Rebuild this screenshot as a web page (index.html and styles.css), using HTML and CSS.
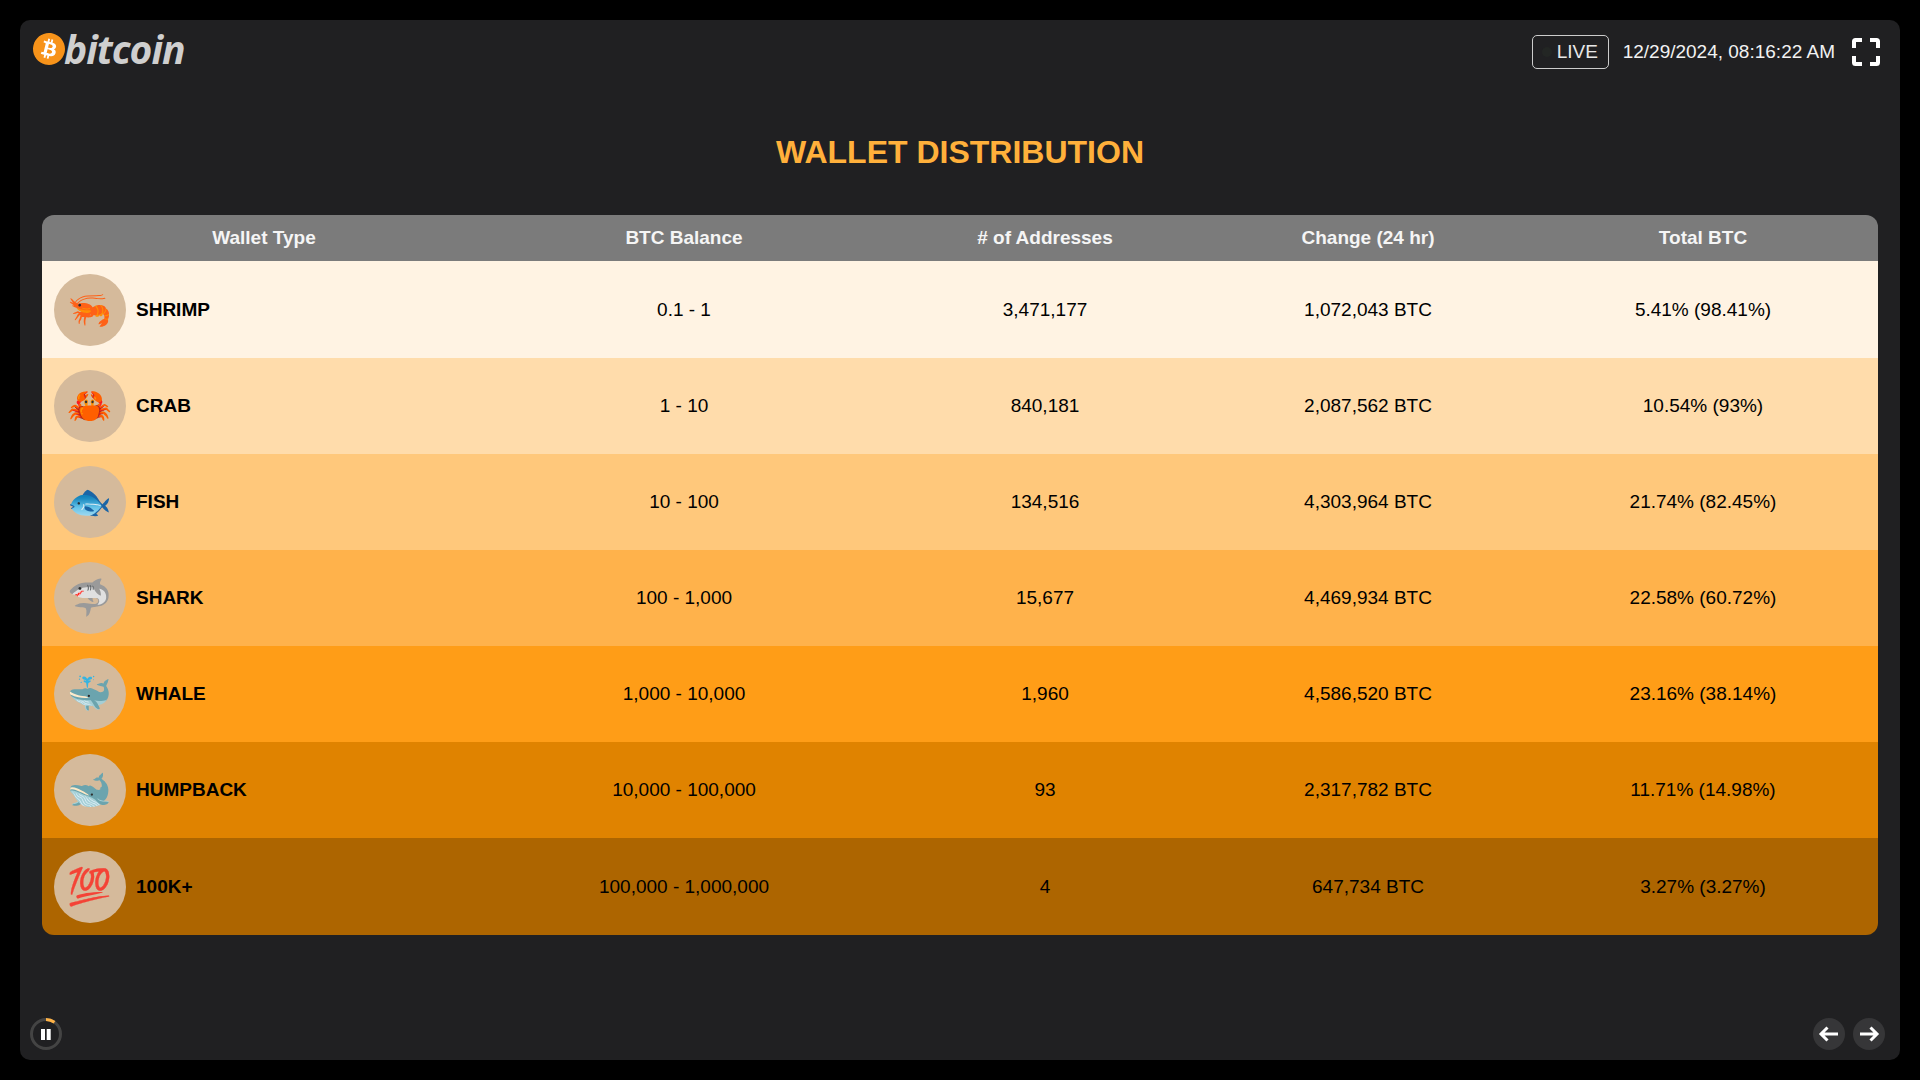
FILE: index.html
```html
<!DOCTYPE html>
<html lang="en">
<head>
<meta charset="utf-8">
<title>Wallet Distribution</title>
<link rel="stylesheet" href="styles.css">
</head>
<body>
<main class="panel">
  <header class="topbar">
    <div class="logo">
      <svg class="logo-mark" viewBox="0 0 24 24"><circle cx="12" cy="12" r="11" fill="#fff"/><path fill="#f7931a" d="M23.638 14.904c-1.602 6.43-8.113 10.34-14.542 8.736C2.67 22.05-1.244 15.525.362 9.105 1.962 2.67 8.475-1.243 14.9.358c6.43 1.605 10.342 8.115 8.738 14.548v-.002zm-6.35-4.613c.24-1.59-.974-2.45-2.64-3.03l.54-2.153-1.315-.33-.525 2.107c-.345-.087-.705-.167-1.064-.25l.526-2.127-1.32-.33-.54 2.165c-.285-.067-.565-.132-.84-.2l-1.815-.45-.35 1.407s.975.225.955.236c.535.136.63.486.615.766l-1.477 5.92c-.075.166-.24.406-.614.314.015.02-.96-.24-.96-.24l-.66 1.51 1.71.426.93.242-.54 2.19 1.32.327.54-2.17c.36.1.705.19 1.05.273l-.51 2.154 1.32.33.545-2.19c2.24.427 3.93.257 4.64-1.774.57-1.637-.03-2.58-1.217-3.196.854-.193 1.5-.76 1.68-1.93h.01zm-3.01 4.22c-.404 1.64-3.157.75-4.05.53l.72-2.9c.896.23 3.757.67 3.33 2.37zm.41-4.24c-.37 1.49-2.662.735-3.405.55l.654-2.64c.744.18 3.137.524 2.75 2.084v.006z"/></svg>
      <span class="logo-word">bitcoin</span>
    </div>
    <div class="status">
      <div class="live"><span class="live-dot"></span>LIVE</div>
      <time class="clock">12/29/2024, 08:16:22 AM</time>
      <svg class="fullscreen" viewBox="0 0 28 28"><path d="M2 10V3.500Q2 2 3.500 2H10M18 2h6.500Q26 2 26 3.500V10M26 18v6.500Q26 26 24.500 26H18M10 26H3.500Q2 26 2 24.500V18" fill="none" stroke="#fff" stroke-width="4"/></svg>
    </div>
  </header>

  <h1 class="title">WALLET DISTRIBUTION</h1>

  <table class="wallets">
    <colgroup><col class="c1"><col class="c2"><col class="c3"><col class="c4"><col class="c5"></colgroup>
    <thead>
      <tr><th>Wallet Type</th><th>BTC Balance</th><th># of Addresses</th><th>Change (24 hr)</th><th>Total BTC</th></tr>
    </thead>
    <tbody>
      <tr class="r1"><td><div class="wallet"><span class="avatar">🦐</span><b>SHRIMP</b></div></td><td>0.1 - 1</td><td>3,471,177</td><td>1,072,043 BTC</td><td>5.41% (98.41%)</td></tr>
      <tr class="r2"><td><div class="wallet"><span class="avatar">🦀</span><b>CRAB</b></div></td><td>1 - 10</td><td>840,181</td><td>2,087,562 BTC</td><td>10.54% (93%)</td></tr>
      <tr class="r3"><td><div class="wallet"><span class="avatar">🐟</span><b>FISH</b></div></td><td>10 - 100</td><td>134,516</td><td>4,303,964 BTC</td><td>21.74% (82.45%)</td></tr>
      <tr class="r4"><td><div class="wallet"><span class="avatar">🦈</span><b>SHARK</b></div></td><td>100 - 1,000</td><td>15,677</td><td>4,469,934 BTC</td><td>22.58% (60.72%)</td></tr>
      <tr class="r5"><td><div class="wallet"><span class="avatar">🐳</span><b>WHALE</b></div></td><td>1,000 - 10,000</td><td>1,960</td><td>4,586,520 BTC</td><td>23.16% (38.14%)</td></tr>
      <tr class="r6"><td><div class="wallet"><span class="avatar">🐋</span><b>HUMPBACK</b></div></td><td>10,000 - 100,000</td><td>93</td><td>2,317,782 BTC</td><td>11.71% (14.98%)</td></tr>
      <tr class="r7"><td><div class="wallet"><span class="avatar">💯</span><b>100K+</b></div></td><td>100,000 - 1,000,000</td><td>4</td><td>647,734 BTC</td><td>3.27% (3.27%)</td></tr>
    </tbody>
  </table>

  <footer class="bottombar">
    <div class="pause">
      <svg viewBox="0 0 32 32"><circle cx="16" cy="16" r="14.500" fill="none" stroke="#444" stroke-width="3"/><path d="M16 1.500A14.500 14.500 0 0 1 24.500 4.300" fill="none" stroke="#ffb347" stroke-width="3"/><path d="M11 11h4v11h-4zM16.700 11h4v11h-4z" fill="#fff"/></svg>
    </div>
    <div class="nav">
      <span class="nav-btn"><svg viewBox="0 0 32 32"><path d="M25 16H9M14.500 9.500L8 16l6.500 6.500" fill="none" stroke="#fff" stroke-width="3"/></svg></span>
      <span class="nav-btn"><svg viewBox="0 0 32 32"><path d="M7 16h16M17.500 9.500L24 16l-6.500 6.500" fill="none" stroke="#fff" stroke-width="3"/></svg></span>
    </div>
  </footer>
</main>
</body>
</html>
```
FILE: styles.css
```css
* { box-sizing: border-box; }
html, body { height: 100%; }
body {
  margin: 0;
  padding: 20px;
  background: #000;
  font-family: "Liberation Sans", Arial, sans-serif;
  color: #fff;
}
.panel {
  height: 1040px;
  background: #202022;
  border-radius: 10px;
  display: flex;
  flex-direction: column;
  padding: 13px 22px 10px;
  overflow: hidden;
}
.topbar {
  display: flex;
  justify-content: space-between;
  align-items: flex-start;
  margin: 0 -2px 0 -9px;
}
.logo { display: flex; align-items: center; height: 32px; }
.logo-mark { width: 32px; height: 32px; }
.logo-word {
  font-family: "Open Sans", sans-serif;
  font-style: italic;
  font-weight: 700;
  font-size: 39px;
  line-height: 32px;
  color: #cfcfcf;
  letter-spacing: -1px;
  margin-left: -1px;
}
.status { display: flex; align-items: center; gap: 14px; height: 34px; margin-top: 2px; }
.live {
  width: 77px;
  height: 34px;
  border: 1px solid #ccc;
  border-radius: 5px;
  font-size: 19px;
  line-height: 32px;
  padding-left: 24px;
  color: #e8e8e8;
  position: relative;
}
.live-dot {
  position: absolute;
  left: 9px;
  top: 11px;
  width: 10px;
  height: 10px;
  border-radius: 50%;
  background: #232624;
}
.clock { font-size: 19px; color: #f2f2f2; }
.fullscreen { width: 28px; height: 28px; margin-left: 3px; }
.title {
  margin: 65px 0 44px;
  text-align: center;
  font-size: 32px;
  line-height: 37px;
  font-weight: 700;
  color: #ffb03b;
}
.wallets {
  width: 1836px;
  table-layout: fixed;
  border-collapse: separate;
  border-spacing: 0;
  border-radius: 12px;
  overflow: hidden;
  font-size: 19px;
  color: #000;
}
.c1 { width: 444px; } .c2 { width: 396px; } .c3 { width: 326px; } .c4 { width: 320px; } .c5 { width: 350px; }
th {
  height: 46px;
  padding: 0;
  background: #7b7b7b;
  color: #f5f5f5;
  font-weight: 700;
  text-align: center;
}
td { height: 96px; padding: 0; text-align: center; }
.r1 td, .r7 td { height: 97px; }
.wallet { display: flex; align-items: center; gap: 10px; padding-left: 12px; }
.wallet b { font-size: 19px; }
.avatar {
  width: 72px;
  height: 72px;
  border-radius: 50%;
  background: #d5ba9b;
  display: flex;
  align-items: center;
  justify-content: center;
  font-family: "Noto Color Emoji", sans-serif;
  font-size: 36px;
}
.r1 td { background: #fff3e3; }
.r2 td { background: #ffdcab; }
.r3 td { background: #ffc87b; }
.r4 td { background: #ffb24b; }
.r5 td { background: #ff9d17; }
.r6 td { background: #e08300; }
.r7 td { background: #ad6500; }
.bottombar {
  margin: auto -7px 0 -12px;
  display: flex;
  justify-content: space-between;
  align-items: center;
}
.pause { width: 32px; height: 32px; }
.pause svg, .nav-btn svg { display: block; width: 32px; height: 32px; }
.nav { display: flex; gap: 8px; }
.nav-btn { width: 32px; height: 32px; border-radius: 50%; background: #363638; }
```
